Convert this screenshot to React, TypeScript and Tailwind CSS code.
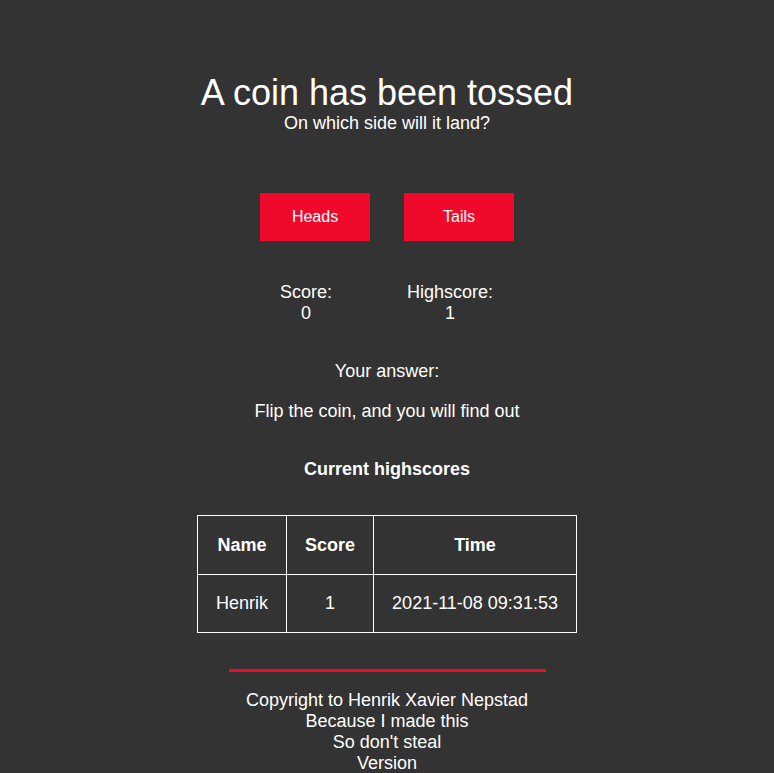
export default function App() {
  return (
    <div className="min-h-screen bg-[#333333] text-white font-['Liberation_Sans',Arial,sans-serif] text-center">
      <div className="pt-[72px] pb-8 flex flex-col items-center">
        {/* Header */}
        <h1 className="text-[36px] leading-[41px] font-normal">A coin has been tossed</h1>
        <p className="text-[18px] leading-[21px]">On which side will it land?</p>

        {/* Buttons */}
        <div className="mt-[59px] flex gap-[34px]">
          <button className="w-[110px] h-[48px] bg-[#ef0a2c] text-white text-[16px]">Heads</button>
          <button className="w-[110px] h-[48px] bg-[#ef0a2c] text-white text-[16px]">Tails</button>
        </div>

        {/* Scores */}
        <div className="mt-[41px] flex gap-[34px] pr-[18px] text-[18px] leading-[21px]">
          <div className="w-[110px]">
            <div>Score:</div>
            <div>0</div>
          </div>
          <div className="w-[110px]">
            <div>Highscore:</div>
            <div>1</div>
          </div>
        </div>

        <p className="mt-[37px] text-[18px] leading-[21px]">Your answer:</p>
        <p className="mt-[19px] text-[18px] leading-[21px]">Flip the coin, and you will find out</p>

        <h2 className="mt-[37px] text-[18px] leading-[21px] font-bold">Current highscores</h2>

        {/* Highscore table */}
        <table className="mt-[35px] border-collapse text-[18px] leading-[21px]">
          <thead>
            <tr>
              <th className="border border-white px-[18px] pt-[19px] pb-[18px] font-bold">Name</th>
              <th className="border border-white px-[18px] pt-[19px] pb-[18px] font-bold">Score</th>
              <th className="border border-white px-[18px] pt-[19px] pb-[18px] font-bold">Time</th>
            </tr>
          </thead>
          <tbody>
            <tr>
              <td className="border border-white px-[18px] py-[18px]">Henrik</td>
              <td className="border border-white px-[18px] py-[18px]">1</td>
              <td className="border border-white px-[18px] py-[18px]">2021-11-08 09:31:53</td>
            </tr>
          </tbody>
        </table>

        {/* Footer */}
        <div className="mt-[36px] w-[317px] h-[3px] bg-[#ef0a2c]"></div>
        <footer className="mt-[18px] text-[18px] leading-[21px]">
          <div>Copyright to Henrik Xavier Nepstad</div>
          <div>Because I made this</div>
          <div>So don't steal</div>
          <div>Version</div>
        </footer>
      </div>
    </div>
  );
}
